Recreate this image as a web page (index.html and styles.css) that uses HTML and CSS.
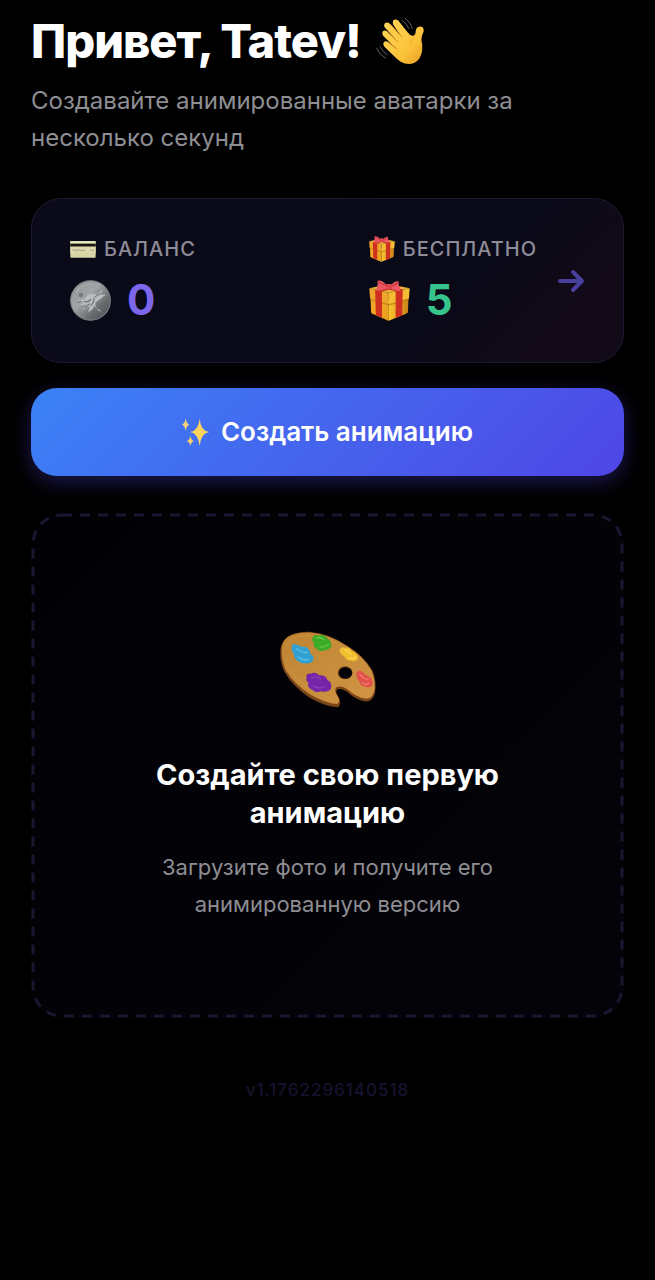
FILE: index.html
```html
<!DOCTYPE html>
<html lang="ru">
<head>
  <meta charset="UTF-8">
  <meta name="viewport" content="width=device-width, initial-scale=1">
  <title>Анимированные аватарки</title>
  <link rel="stylesheet" href="styles.css">
</head>
<body>
  <svg class="defs" aria-hidden="true">
    <defs>
      <linearGradient id="box-left" x1="0" y1="0" x2="1" y2="1">
        <stop offset="0" stop-color="#f2a928"/>
        <stop offset="1" stop-color="#e8a01c"/>
      </linearGradient>
      <linearGradient id="box-right" x1="0" y1="0" x2="1" y2="0">
        <stop offset="0" stop-color="#fbc62f"/>
        <stop offset="1" stop-color="#c98218"/>
      </linearGradient>
      <symbol id="gift" viewBox="0 0 120 120">
        <path d="M4 42 L58 56 V119 Q54 119 50 116 L10 99 Q6 97 6 93 Z" fill="url(#box-left)"/>
        <path d="M116 42 L58 56 V119 L110 98 Q114 96 114 92 Z" fill="url(#box-right)"/>
        <path d="M1 24 L58 12 L119 24 L58 38 Z" fill="#e6b03a"/>
        <path d="M1 24 L58 38 V70 L3 54 Z" fill="#eda52c"/>
        <path d="M119 24 L58 38 V70 L117 54 Z" fill="#f4bd34"/>
        <path d="M3 54 L58 70 L117 54 V58 L58 75 L4 58 Z" fill="#a8620f" opacity=".5"/>
        <path d="M18 29 L38 34 V110 L20 103 Z" fill="#cf3020"/>
        <path d="M78 33 L99 28 L97 103 L78 111 Z" fill="#cf3020"/>
        <path d="M18 29 L75 15 L97 19 L38 34 Z" fill="#d43a2a"/>
        <path d="M99 28 L44 15 L27 19 L78 33 Z" fill="#b9281e"/>
        <path d="M54 17 Q35 -3 24 3 Q28 12 22 27 Q23 32 30 31 Q46 27 55 24 Z" fill="#ec5660"/>
        <path d="M63 17 Q78 0 87 5 Q85 13 92 27 Q92 33 84 32 Q72 30 62 24 Z" fill="#ec5660"/>
        <path d="M52 17 Q35 12 27 5 M64 18 Q76 15 85 8" fill="none" stroke="#c42f3c" stroke-width="3"/>
        <rect x="50" y="12" width="17" height="16" rx="6" fill="#e0434e"/>
      </symbol>
    </defs>
  </svg>

  <main class="page">
    <header class="greeting">
      <h1>
        Привет, Tatev!
        <svg class="wave" viewBox="36 32 152 148" aria-hidden="true">
          <linearGradient id="skin" x1="0" y1="0" x2="1" y2="1">
            <stop offset="0" stop-color="#ffd65a"/>
            <stop offset=".65" stop-color="#fbc33a"/>
            <stop offset="1" stop-color="#e89a22"/>
          </linearGradient>
          <path fill="url(#skin)" d="M91 44 Q97 38 106 43 L137 82 Q144 92 153 90 Q160 86 160 73 Q162 63 175 62 Q185 64 184 76 Q177 90 177 103 Q182 118 179 138 Q174 164 155 173 Q135 181 114 169 Q104 163 96 154 L64 123 Q58 116 63 109 Q68 105 75 109 L98 127 L60 89 Q55 82 60 76 Q67 72 74 78 L105 108 L66 65 Q61 57 67 51 Q74 47 82 54 L115 91 L93 59 Q88 51 91 44 Z"/>
          <path d="M76 109 L102 130 M74 79 L106 109 M82 55 L117 92" fill="none" stroke="#d98b20" stroke-width="3" stroke-linecap="round"/>
          <path d="M158 91 Q145 101 145 119" fill="none" stroke="#e5a02c" stroke-width="2"/>
          <path d="M127 37 Q144 49 149 68 M119 44 Q133 53 139 68 M41 128 Q49 148 68 158 M51 124 Q59 139 73 147" fill="none" stroke="#5c6166" stroke-width="3" stroke-linecap="round"/>
        </svg>
      </h1>
      <p>Создавайте анимированные аватарки за несколько секунд</p>
    </header>

    <a class="balance" href="#">
      <span class="stats">
        <span class="stat">
          <span class="label">
            <svg class="label-icon" viewBox="0 0 78 78" aria-hidden="true">
              <rect x="1" y="15" width="76" height="50" rx="3" fill="#d8d5a4"/>
              <path d="M1 18 Q1 15 4 15 H74 Q77 15 77 18 V23 H1 Z" fill="#e3e5bd"/>
              <rect x="1" y="23" width="76" height="9" fill="#17160f"/>
              <rect x="1" y="32" width="76" height="20" fill="#dcd8ab"/>
              <path d="M8 43 L14 41 L19 45 L25 41 L32 44 L39 42 L45 45 M62 43 H72" fill="none" stroke="#a09d80" stroke-width="3"/>
            </svg>
            Баланс
          </span>
          <span class="value">
            <svg class="value-icon" viewBox="0 0 120 120" aria-hidden="true">
              <linearGradient id="silver" x1="0" y1="0" x2="1" y2="1">
                <stop offset="0" stop-color="#8f9293"/>
                <stop offset=".4" stop-color="#a2a5a6"/>
                <stop offset=".7" stop-color="#686b6e"/>
                <stop offset="1" stop-color="#4a4c50"/>
              </linearGradient>
              <circle cx="60" cy="60" r="58" fill="url(#silver)" stroke="#828588" stroke-width="3"/>
              <path d="M18 36 Q32 12 66 11" fill="none" stroke="#b5b7b8" stroke-width="4" stroke-dasharray="4 3"/>
              <path d="M22 64 Q31 54 42 59 Q48 44 61 42 Q72 38 77 44 Q87 38 96 27 Q94 36 89 43 Q98 41 105 45 Q96 47 91 54 Q81 59 75 66 Q72 76 79 82 Q87 86 91 93 Q79 90 70 80 Q65 89 52 95 Q58 86 57 76 Q47 86 36 88 Q46 80 50 69 Q39 76 28 73 Q38 70 42 64 Z" fill="#babdbe"/>
              <path d="M42 62 Q53 67 62 56 M60 75 Q72 66 70 52 M72 50 L91 39 M44 83 L57 69 M69 77 L83 87 M22 67 L34 61" fill="none" stroke="#66696c" stroke-width="3"/>
              <circle cx="32" cy="44" r="7" fill="#777a7c"/>
            </svg>
            <strong class="coins">0</strong>
          </span>
        </span>
        <span class="stat">
          <span class="label">
            <svg class="label-icon" aria-hidden="true"><use href="#gift"/></svg>
            Бесплатно
          </span>
          <span class="value">
            <svg class="value-icon" aria-hidden="true"><use href="#gift"/></svg>
            <strong class="free">5</strong>
          </span>
        </span>
      </span>
      <svg class="arrow" viewBox="0 0 28 24" aria-hidden="true">
        <path d="M3 12 H24 M16 3 L25 12 L16 21"/>
      </svg>
    </a>

    <button class="create" type="button">
      <svg class="sparkles" viewBox="0 0 84 84" aria-hidden="true">
        <path d="M53 2 Q56 39 82 42 Q56 46 53 84 Q49 46 24 42 Q49 39 53 2 Z" fill="#ffd25e"/>
        <path d="M11 1 Q13 17 22 20 Q13 23 11 39 Q9 23 0 20 Q9 17 11 1 Z" fill="#f7d27a"/>
        <path d="M25 53 Q27 66 36 69 Q27 72 25 84 Q23 72 14 69 Q23 66 25 53 Z" fill="#f7cf6c"/>
      </svg>
      Создать анимацию
    </button>

    <section class="empty">
      <svg class="dashes" aria-hidden="true"><rect x="2" y="2" rx="29"/></svg>
      <svg class="palette" viewBox="40 46 292 232" aria-hidden="true">
        <linearGradient id="wood" x1="0" y1="0" x2="1" y2="1">
          <stop offset="0" stop-color="#c08433"/>
          <stop offset=".5" stop-color="#c78d3b"/>
          <stop offset="1" stop-color="#d29546"/>
        </linearGradient>
        <path d="M44 112 Q43 82 66 65 Q92 50 132 51 Q190 56 246 94 Q292 122 318 166 Q332 200 326 235 Q318 260 297 259 Q268 254 242 229 Q226 218 213 223 Q207 231 219 248 Q227 268 216 276 Q180 275 130 247 Q80 213 57 172 Q43 144 44 112 Z" fill="#7b451a"/>
        <path d="M48 105 Q47 80 69 65 Q93 52 132 53 Q190 58 244 95 Q290 123 316 167 Q329 200 324 228 Q316 252 297 250 Q268 245 244 222 Q226 210 210 217 Q203 226 215 244 Q224 260 213 266 Q180 265 133 238 Q84 207 60 166 Q48 140 48 105 Z" fill="url(#wood)"/>
        <path d="M60 94 Q75 61 133 62 Q184 66 240 102 M64 154 Q100 212 176 242 M148 119 Q181 138 199 165" fill="none" stroke="#e1ac59" stroke-width="2" opacity=".4"/>
        <ellipse cx="237" cy="173" rx="22" ry="19" fill="#6d3d18"/>
        <ellipse cx="238" cy="174" rx="20" ry="17" fill="#050408"/>
        <path d="M78 94 Q80 84 92 89 Q103 96 115 96 Q132 99 133 116 Q146 124 142 137 Q133 148 119 145 Q105 147 94 137 Q84 130 84 116 Q75 106 78 94 Z" fill="#33a0d2"/>
        <path d="M91 101 Q107 113 124 113 M99 127 Q111 138 127 133" fill="none" stroke="#5cbfe6" stroke-width="4" stroke-linecap="round"/>
        <path d="M140 68 Q146 58 158 62 Q176 57 183 71 Q197 78 196 94 Q190 106 175 106 Q162 113 152 102 Q141 96 144 84 Q136 77 140 68 Z" fill="#3cab28"/>
        <path d="M152 70 Q164 65 173 74 M163 96 Q177 99 187 88" fill="none" stroke="#66c944" stroke-width="4" stroke-linecap="round"/>
        <path d="M221 104 Q224 95 238 99 Q249 94 257 108 Q277 116 276 131 Q270 142 254 137 Q240 139 235 125 Q220 117 221 104 Z" fill="#f0c030"/>
        <path d="M236 106 Q245 105 253 117 M249 130 Q260 133 267 126" fill="none" stroke="#fbd95c" stroke-width="4" stroke-linecap="round"/>
        <path d="M271 174 Q277 161 288 171 Q299 182 310 185 Q323 194 318 211 Q309 222 296 214 Q283 214 280 200 Q269 189 271 174 Z" fill="#e2504a"/>
        <path d="M281 178 Q290 191 305 193 M288 203 Q298 211 308 205" fill="none" stroke="#f07b70" stroke-width="4" stroke-linecap="round"/>
        <path d="M122 188 Q120 174 134 176 Q149 169 161 181 Q178 180 184 194 Q202 205 193 224 Q181 233 165 228 Q149 235 139 224 Q122 217 128 203 Q119 198 122 188 Z" fill="#7526a8"/>
        <path d="M137 189 Q151 181 163 192 M144 214 Q159 222 174 215" fill="none" stroke="#8d3fbd" stroke-width="4" stroke-linecap="round"/>
      </svg>
      <h2>Создайте свою первую анимацию</h2>
      <p>Загрузите фото и получите его анимированную версию</p>
    </section>

    <footer class="version">v1.1762296140518</footer>
  </main>
</body>
</html>
```

FILE: styles.css
```css
* {
  box-sizing: border-box;
}

body {
  margin: 0;
  min-height: 100vh;
  background: #000;
  color: #fff;
  font-family: Inter, "Liberation Sans", sans-serif;
}

h1, h2, p {
  margin: 0;
}

.defs {
  position: absolute;
  width: 0;
  height: 0;
}

.page {
  padding: 12px 31px 0;
}

/* greeting */
.greeting h1 {
  display: flex;
  align-items: center;
  gap: 14px;
  font-size: 47px;
  font-weight: 800;
  line-height: 58px;
  letter-spacing: -1px;
}
.wave {
  width: 50px;
  height: 50px;
}
.greeting p {
  margin-top: 12px;
  color: #8e8e93;
  font-size: 24px;
  line-height: 37px;
}

/* balance card */
.balance {
  display: flex;
  align-items: center;
  gap: 20px;
  margin-top: 42px;
  padding: 37px 38px;
  border: 1px solid #1d1a33;
  border-radius: 30px;
  background: linear-gradient(135deg, #0a0a18 0%, #0a0917 70%, #120a18 85%, #130a18 100%);
  color: inherit;
  text-decoration: none;
}
.stats {
  flex: 1;
  display: flex;
  justify-content: space-between;
}
.stat {
  display: flex;
  flex-direction: column;
  gap: 13px;
}
.label {
  display: flex;
  align-items: center;
  gap: 8px;
  color: #8e8c98;
  font-size: 20px;
  font-weight: 500;
  line-height: 24px;
  letter-spacing: 1px;
  text-transform: uppercase;
}
.label-icon {
  width: 26px;
  height: 26px;
}
.value {
  display: flex;
  align-items: center;
  gap: 16px;
  font-size: 42px;
  line-height: 50px;
}
.value-icon {
  width: 41px;
  height: 41px;
}
.coins {
  color: #7c66ea;
}
.free {
  color: #36c48c;
}
.arrow {
  width: 28px;
  height: 24px;
  fill: none;
  stroke: #493f9c;
  stroke-width: 4;
  stroke-linecap: round;
  stroke-linejoin: round;
}

/* main action */
.create {
  display: flex;
  align-items: center;
  justify-content: center;
  gap: 11px;
  width: 100%;
  height: 88px;
  margin-top: 25px;
  border: 0;
  border-radius: 26px;
  background: linear-gradient(135deg, #3b82f6 0%, #4f46e5 100%);
  box-shadow: 0 6px 20px rgba(79, 70, 229, .35);
  color: #fff;
  font: 600 26px/32px Inter, "Liberation Sans", sans-serif;
  cursor: pointer;
}
.sparkles {
  width: 28px;
  height: 28px;
}

/* empty state */
.empty {
  position: relative;
  display: flex;
  flex-direction: column;
  align-items: center;
  margin-top: 37px;
  padding: 117px 92px 95px;
  border-radius: 30px;
  background: linear-gradient(135deg, #010105 0%, #040309 100%);
  text-align: center;
}
/* dashed frame with wider gaps than border-style gives */
.dashes {
  position: absolute;
  inset: 0;
  width: 100%;
  height: 100%;
}
.dashes rect {
  width: calc(100% - 4px);
  height: calc(100% - 4px);
  fill: none;
  stroke: #1a1730;
  stroke-width: 3;
  stroke-dasharray: 10 8;
}
.palette {
  width: 98px;
  height: 78px;
}
.empty h2 {
  margin-top: 48px;
  font-size: 29px;
  font-weight: 700;
  line-height: 38px;
}
.empty p {
  margin-top: 17px;
  color: #8e8e93;
  font-size: 22px;
  line-height: 37px;
}

.version {
  margin: 60px 0;
  color: #16132e;
  font-size: 17px;
  font-weight: 500;
  line-height: 24px;
  letter-spacing: 1px;
  text-align: center;
}
```
